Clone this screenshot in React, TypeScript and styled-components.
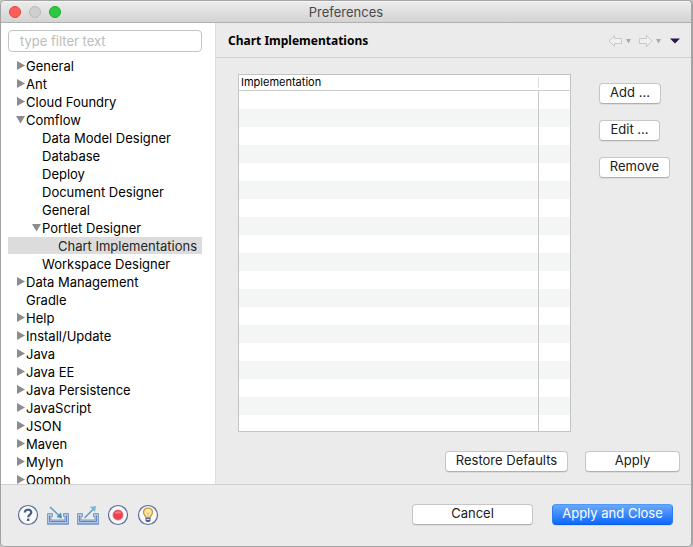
import React from "react";
import styled, { createGlobalStyle, css } from "styled-components";

const GlobalStyle = createGlobalStyle`
  * { box-sizing: border-box; }
  body {
    margin: 0;
    background: #c4c4c4;
    font-family: Inter, "Liberation Sans", sans-serif;
    font-size: 13px;
    color: #000;
  }
  button, input { font: inherit; }
`;

const Window = styled.div`
  display: flex;
  flex-direction: column;
  height: 100vh;
  border: 1px solid #a3a3a3;
  border-right-width: 2px;
  border-radius: 5px;
  background: #ebebeb;
  overflow: hidden;
`;

const TitleBar = styled.header`
  display: grid;
  grid-template-columns: 1fr auto 1fr;
  align-items: center;
  flex: none;
  height: 22px;
  padding: 0 8px;
  background: linear-gradient(#ebebeb, #d3d3d3);
  border-bottom: 1px solid #b1b1b1;
  border-top: 1px solid #f6f6f6;
`;

const Lights = styled.div`
  display: flex;
  gap: 8px;
`;

const Light = styled.button<{ $fill: string; $edge: string }>`
  width: 12px;
  height: 12px;
  padding: 0;
  border-radius: 50%;
  border: 1px solid ${(p) => p.$edge};
  background: ${(p) => p.$fill};
`;

const WindowTitle = styled.h1`
  margin: 0;
  font-size: 13px;
  line-height: 20px;
  font-weight: 400;
  color: #4a4a4a;
`;

const Body = styled.div`
  display: flex;
  flex: 1;
  min-height: 0;
`;

const Sidebar = styled.aside`
  display: flex;
  flex-direction: column;
  flex: none;
  width: 215px;
  padding: 7px 13px 0 7px;
  background: #fff;
  border-right: 1px solid #dedede;
  overflow: hidden;
`;

const Filter = styled.input`
  flex: none;
  width: 100%;
  height: 22px;
  padding: 0 11px;
  border: 1px solid #c4c4c4;
  border-radius: 4px;
  background: #fff;
  outline: none;
  &::placeholder { color: #bcbcbc; opacity: 1; }
`;

const Tree = styled.ul`
  flex: 1;
  min-height: 0;
  margin: 5px 0 0;
  padding: 0;
  list-style: none;
  overflow: hidden;
`;

const TreeRow = styled.li<{ $level: number; $selected: boolean }>`
  display: flex;
  align-items: center;
  height: 18px;
  padding-left: ${(p) => 8 + p.$level * 16}px;
  line-height: 18px;
  white-space: nowrap;
  ${(p) =>
    p.$selected &&
    css`
      background: linear-gradient(#dcdcdc, #dcdcdc) 0 0 / 100% 17px no-repeat;
      color: #262626;
    `}
`;

const Twisty = styled.svg`
  flex: none;
  width: 10px;
  height: 18px;
  fill: #8c8c8c;
`;

const Page = styled.main`
  display: flex;
  flex-direction: column;
  flex: 1;
  min-width: 0;
`;

const PageHeader = styled.div`
  display: flex;
  align-items: center;
  justify-content: space-between;
  flex: none;
  height: 35px;
  padding: 0 10px 0 12px;
  border-bottom: 1px solid #d0d0d0;
`;

const PageTitle = styled.h2`
  margin: 0;
  padding-top: 2px;
  font: 700 12px/18px "Noto Sans", "Open Sans", sans-serif;
`;

const NavTools = styled.div`
  display: flex;
  align-items: center;
  padding-top: 2px;
`;

const NavButton = styled.button<{ $width: number }>`
  display: flex;
  justify-content: flex-start;
  align-items: center;
  width: ${(p) => p.$width}px;
  height: 16px;
  padding: 0;
  border: 0;
  background: none;
`;

const Content = styled.div`
  display: flex;
  flex: 1;
  min-height: 0;
  gap: 28px;
  padding: 16px 20px 0 22px;
`;

const TableFrame = styled.div`
  flex: 1;
  min-width: 0;
  border: 1px solid #c3c3c3;
  background: #fff;
  overflow: hidden;
`;

const Table = styled.table`
  width: 100%;
  table-layout: fixed;
  border-collapse: separate;
  border-spacing: 0;

  th {
    height: 16px;
    padding: 0 0 0 2px;
    border-bottom: 1px solid #cdcdcd;
    font-size: 11px;
    line-height: 15px;
    font-weight: 400;
    text-align: left;
  }
  th:last-child {
    background: linear-gradient(#dedede, #dedede) 0 2px / 1px 11px no-repeat;
  }
  td {
    height: 18px;
    padding: 0;
  }
  td:last-child { border-left: 1px solid #c9c9c9; }
  tbody tr:nth-child(even) { background: #f4f5f5; }
`;

const NarrowCol = styled.col`
  width: 32px;
`;

const SideActions = styled.div`
  display: flex;
  flex-direction: column;
  align-items: flex-start;
  flex: none;
  width: 72px;
  gap: 16px;
  padding-top: 9px;
`;

const PushButton = styled.button<{ $width: number; $primary?: boolean }>`
  flex: none;
  width: ${(p) => p.$width}px;
  height: 21px;
  padding: 0 0 2px;
  border: 1px solid #c6c6c6;
  border-bottom-color: #b0b0b0;
  border-radius: 4px;
  background: #fff;
  box-shadow: 0 1px 0 rgba(0, 0, 0, 0.06);
  color: #202020;
  line-height: 17px;
  white-space: nowrap;
  ${(p) =>
    p.$primary &&
    css`
      border-color: #4f97f8 #2f7df5 #0b5ce8;
      background: linear-gradient(#69a9fa, #0d68fb);
      color: #fff;
    `}
`;

const PageActions = styled.div`
  display: flex;
  justify-content: flex-end;
  flex: none;
  gap: 17px;
  padding: 19px 11px 12px 0;
`;

const Footer = styled.footer`
  display: flex;
  align-items: center;
  justify-content: space-between;
  flex: none;
  height: 62px;
  padding: 0 18px 2px 15px;
  border-top: 1px solid #d0d0d0;
`;

const IconGroup = styled.div`
  display: flex;
  gap: 6px;
`;

const IconButton = styled.button`
  display: flex;
  width: 24px;
  height: 22px;
  padding: 0;
  border: 0;
  background: none;
`;

const DialogActions = styled.div`
  display: flex;
  gap: 19px;
`;

type Node = { label: string; level?: number; state?: "open" | "closed"; selected?: boolean };

const nodes: Node[] = [
  { label: "General", state: "closed" },
  { label: "Ant", state: "closed" },
  { label: "Cloud Foundry", state: "closed" },
  { label: "Comflow", state: "open" },
  { label: "Data Model Designer", level: 1 },
  { label: "Database", level: 1 },
  { label: "Deploy", level: 1 },
  { label: "Document Designer", level: 1 },
  { label: "General", level: 1 },
  { label: "Portlet Designer", level: 1, state: "open" },
  { label: "Chart Implementations", level: 2, selected: true },
  { label: "Workspace Designer", level: 1 },
  { label: "Data Management", state: "closed" },
  { label: "Gradle" },
  { label: "Help", state: "closed" },
  { label: "Install/Update", state: "closed" },
  { label: "Java", state: "closed" },
  { label: "Java EE", state: "closed" },
  { label: "Java Persistence", state: "closed" },
  { label: "JavaScript", state: "closed" },
  { label: "JSON", state: "closed" },
  { label: "Maven", state: "closed" },
  { label: "Mylyn", state: "closed" },
  { label: "Oomph", state: "closed" },
];

const emptyRows = Array.from({ length: 20 }, (_, i) => i);

const NavArrow = ({ flip }: { flip?: boolean }) => (
  <svg width="15" height="14" viewBox="0 0 15 14" aria-hidden="true">
    <path
      d="M1 7 L6.5 1.5 V4.5 H13.5 V9.5 H6.5 V12.5 Z"
      transform={flip ? "translate(15 0) scale(-1 1)" : undefined}
      fill="#f0f0f0"
      stroke="#c9c9c9"
      strokeLinejoin="round"
    />
  </svg>
);

const SmallCaret = () => (
  <svg width="5" height="6" viewBox="0 0 5 6" aria-hidden="true">
    <path d="M0 1 H5 L2.5 5.5 Z" fill="#aaa" />
  </svg>
);

const Tray = ({ children }: { children: React.ReactNode }) => (
  <svg width="24" height="22" viewBox="0 0 24 22" aria-hidden="true">
    <path
      d="M1.5 9.5 H6.5 V12.5 H5 V16 H19 V12.5 H17.5 V9.5 H22.5 V20 H1.5 Z"
      fill="#b4c8e6"
      stroke="#7d9bcb"
    />
    <path d="M3.5 11.5 V17.5 H20.5 V11.5" fill="none" stroke="#6482b8" />
    <path d="M1 20 H23" stroke="#6d8dc4" />
    {children}
  </svg>
);

const Ring = ({ children }: { children: React.ReactNode }) => (
  <svg width="24" height="22" viewBox="0 0 24 22" aria-hidden="true">
    <circle cx="12" cy="11" r="9.5" fill="#f7f9fc" stroke="#5a6c91" strokeWidth="1.2" />
    {children}
  </svg>
);

export default function App() {
  return (
    <>
      <GlobalStyle />
      <Window>
        <TitleBar>
          <Lights>
            <Light aria-label="Close" $fill="#ff5f58" $edge="#e2463f" />
            <Light aria-label="Minimize" $fill="#cfcfcf" $edge="#b9b9b9" />
            <Light aria-label="Zoom" $fill="#2ac940" $edge="#1dab2e" />
          </Lights>
          <WindowTitle>Preferences</WindowTitle>
        </TitleBar>

        <Body>
          <Sidebar>
            <Filter type="text" placeholder="type filter text" aria-label="Filter preferences" />
            <Tree role="tree">
              {nodes.map((n, i) => (
                <TreeRow
                  key={i}
                  role="treeitem"
                  aria-level={(n.level ?? 0) + 1}
                  aria-selected={!!n.selected}
                  aria-expanded={n.state ? n.state === "open" : undefined}
                  $level={n.level ?? 0}
                  $selected={!!n.selected}
                >
                  <Twisty viewBox="0 0 10 18" aria-hidden="true">
                    {n.state === "closed" && <path d="M1 4 L9 8.5 L1 13 Z" />}
                    {n.state === "open" && <path d="M0 5 H9 L4.5 12.5 Z" />}
                  </Twisty>
                  {n.label}
                </TreeRow>
              ))}
            </Tree>
          </Sidebar>

          <Page>
            <PageHeader>
              <PageTitle>Chart Implementations</PageTitle>
              <NavTools>
                <NavButton $width={18} aria-label="Back" disabled><NavArrow /></NavButton>
                <NavButton $width={12} aria-label="Back history" disabled><SmallCaret /></NavButton>
                <NavButton $width={18} aria-label="Forward" disabled><NavArrow flip /></NavButton>
                <NavButton $width={14} aria-label="Forward history" disabled><SmallCaret /></NavButton>
                <NavButton $width={11} aria-label="View menu">
                  <svg width="10" height="6" viewBox="0 0 10 6" aria-hidden="true">
                    <path d="M0 0.5 H10 L5 5.5 Z" fill="#2a1648" />
                  </svg>
                </NavButton>
              </NavTools>
            </PageHeader>

            <Content>
              <TableFrame>
                <Table>
                  <colgroup>
                    <col />
                    <NarrowCol />
                  </colgroup>
                  <thead>
                    <tr>
                      <th scope="col">Implementation</th>
                      <th scope="col" aria-label="Spacer" />
                    </tr>
                  </thead>
                  <tbody>
                    {emptyRows.map((r) => (
                      <tr key={r}>
                        <td />
                        <td />
                      </tr>
                    ))}
                  </tbody>
                </Table>
              </TableFrame>
              <SideActions>
                <PushButton $width={62}>Add ...</PushButton>
                <PushButton $width={61}>Edit ...</PushButton>
                <PushButton $width={71}>Remove</PushButton>
              </SideActions>
            </Content>

            <PageActions>
              <PushButton $width={123}>Restore Defaults</PushButton>
              <PushButton $width={95}>Apply</PushButton>
            </PageActions>
          </Page>
        </Body>

        <Footer>
          <IconGroup>
            <IconButton aria-label="Help">
              <Ring>
                <path d="M8.8 8.6 C8.8 4.8 15.3 4.8 15.3 8.4 C15.3 10.6 12.2 10.6 12.2 13.2" fill="none" stroke="#4b5c80" strokeWidth="2.2" />
                <rect x="11" y="14.6" width="2.4" height="2.4" fill="#4b5c80" />
              </Ring>
            </IconButton>
            <IconButton aria-label="Import preferences">
              <Tray>
                <path d="M4 3 L14 12.5" stroke="#5b9cc6" strokeWidth="1.5" />
                <path d="M16 14.5 L10.5 13 L15 8.5 Z" fill="#4c8fbd" />
              </Tray>
            </IconButton>
            <IconButton aria-label="Export preferences">
              <Tray>
                <path d="M8.5 14 L18 4.5" stroke="#5b9cc6" strokeWidth="1.5" />
                <path d="M20 2 L14 3 L19 8 Z" fill="#7fb4d6" />
              </Tray>
            </IconButton>
            <IconButton aria-label="Record">
              <Ring>
                <circle cx="12" cy="11" r="5" fill="#ec4250" stroke="#d96a74" strokeWidth="0.8" />
                <path d="M8.5 9.5 C9.5 6.5 14.5 6.5 15.5 9.5 Z" fill="#f47a83" />
              </Ring>
            </IconButton>
            <IconButton aria-label="Tips">
              <Ring>
                <path d="M9.8 13.5 C9.8 11.5 7.5 10.8 7.5 8.3 C7.5 2.7 16.5 2.7 16.5 8.3 C16.5 10.8 14.2 11.5 14.2 13.5 Z" fill="#fbe9b4" stroke="#cf9a3c" strokeWidth="1.4" />
                <path d="M10.5 8.5 L12 10 L13.5 8.5 M12 10 V13" fill="none" stroke="#dcae5b" strokeWidth="0.8" />
                <path d="M9.5 14 H14.5 V16.5 L13.5 18 H10.5 L9.5 16.5 Z" fill="#4f6288" />
                <path d="M10.5 15.5 H13.5" stroke="#e3e8f0" />
              </Ring>
            </IconButton>
          </IconGroup>
          <DialogActions>
            <PushButton $width={121}>Cancel</PushButton>
            <PushButton $width={121} $primary>Apply and Close</PushButton>
          </DialogActions>
        </Footer>
      </Window>
    </>
  );
}
